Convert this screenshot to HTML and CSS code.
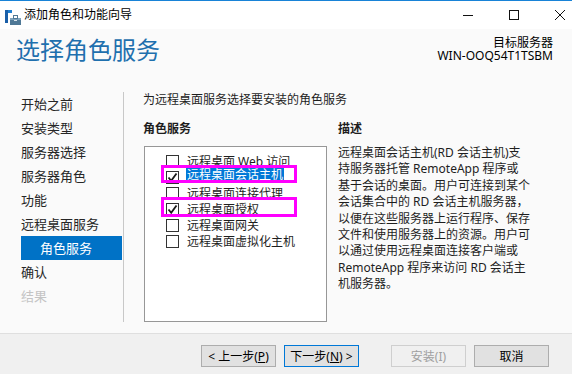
FILE: index.html
```html
<!DOCTYPE html>
<html lang="zh-CN">
<head>
  <meta charset="UTF-8">
  <meta name="viewport" content="width=device-width, initial-scale=1.0">
  <title>添加角色和功能向导</title>
  <link rel="stylesheet" href="styles.css">
</head>
<body>
  <div class="window">

    <div class="titlebar">
      <svg class="app-icon" width="16" height="15" viewBox="0 0 16 15">
        <rect x="0" y="0" width="7" height="3" fill="#1f7fd1"/>
        <rect x="0" y="0" width="3" height="13" fill="#1a5fa8"/>
        <rect x="5" y="8" width="11" height="7" fill="#4f7896"/>
        <rect x="5" y="8" width="11" height="2" fill="#7fa3bd"/>
        <rect x="8.5" y="5.5" width="4" height="3" fill="none" stroke="#4f7896"/>
        <rect x="9" y="10" width="3" height="1" fill="#d9e4ec"/>
      </svg>
      <span class="titulo">添加角色和功能向导</span>
      <div class="controles">
        <span class="controle">
          <svg width="10" height="10" viewBox="0 0 10 10"><path d="M0 5.5h10" stroke="#111" stroke-width="1"/></svg>
        </span>
        <span class="controle">
          <svg width="10" height="10" viewBox="0 0 10 10"><rect x="0.5" y="0.5" width="9" height="9" fill="none" stroke="#111"/></svg>
        </span>
        <span class="controle">
          <svg width="10" height="10" viewBox="0 0 10 10"><path d="M0 0L10 10M10 0L0 10" stroke="#111" stroke-width="1"/></svg>
        </span>
      </div>
    </div>

    <header class="cabecalho">
      <h1>选择角色服务</h1>
      <div class="destino">
        <div>目标服务器</div>
        <div class="servidor">WIN-OOQ54T1TSBM</div>
      </div>
    </header>

    <main class="principal">
      <ul class="etapas">
        <li>开始之前</li>
        <li>安装类型</li>
        <li>服务器选择</li>
        <li>服务器角色</li>
        <li>功能</li>
        <li>远程桌面服务</li>
        <li class="sub ativa">角色服务</li>
        <li>确认</li>
        <li class="desativada">结果</li>
      </ul>

      <div class="conteudo">
        <p class="intro">为远程桌面服务选择要安装的角色服务</p>
        <div class="colunas">
          <div class="papeis">
            <h2>角色服务</h2>
            <div class="lista">
              <ul>
                <li><span class="caixa"></span><span class="rotulo">远程桌面 Web 访问</span></li>
                <li><span class="caixa"><svg width="11" height="11" viewBox="0 0 11 11"><path d="M1.5 5.5L4.2 8.8L9.5 1.5" fill="none" stroke="#1a1a1a" stroke-width="1.8"/></svg></span><span class="rotulo selecionado">远程桌面会话主机</span></li>
                <li><span class="caixa"></span><span class="rotulo">远程桌面连接代理</span></li>
                <li><span class="caixa"><svg width="11" height="11" viewBox="0 0 11 11"><path d="M1.5 5.5L4.2 8.8L9.5 1.5" fill="none" stroke="#1a1a1a" stroke-width="1.8"/></svg></span><span class="rotulo">远程桌面授权</span></li>
                <li><span class="caixa"></span><span class="rotulo">远程桌面网关</span></li>
                <li><span class="caixa"></span><span class="rotulo">远程桌面虚拟化主机</span></li>
              </ul>
              <div class="marca marca-1"></div>
              <div class="marca marca-2"></div>
            </div>
          </div>
          <div class="descricao">
            <h2>描述</h2>
            <p>远程桌面会话主机(RD 会话主机)支<br>持服务器托管 RemoteApp 程序或<br>基于会话的桌面。用户可连接到某个<br>会话集合中的 RD 会话主机服务器，<br>以便在这些服务器上运行程序、保存<br>文件和使用服务器上的资源。用户可<br>以通过使用远程桌面连接客户端或<br>RemoteApp 程序来访问 RD 会话主<br>机服务器。</p>
          </div>
        </div>
      </div>
    </main>

    <footer class="rodape">
      <button class="botao">&lt; 上一步(<u>P</u>)</button>
      <button class="botao padrao">下一步(<u>N</u>) &gt;</button>
      <button class="botao separado" disabled>安装(I)</button>
      <button class="botao">取消</button>
    </footer>

  </div>
</body>
</html>
```

FILE: styles.css
```css
* {
  box-sizing: border-box;
  margin: 0;
  padding: 0;
}

body {
  width: 572px;
  height: 374px;
  overflow: hidden;
  background-color: #fafafa;
  color: #1e1e1e;
  font-family: "Noto Sans", "Noto Sans CJK SC", sans-serif;
  font-size: 12px;
}

ul {
  list-style: none;
}

.window {
  display: flex;
  flex-direction: column;
  height: 374px;
  border-top: 1px solid #1883d7;
}

/* barra de titulo */
.titlebar {
  display: flex;
  align-items: center;
  height: 28px;
  background-color: #fff;
}

.app-icon {
  margin-left: 5px;
  margin-top: 4px;
}

.titulo {
  margin-left: 3px;
  line-height: 16px;
  color: #000;
}

.controles {
  display: flex;
  margin-left: auto;
  margin-right: -11px;
}

.controle {
  display: flex;
  justify-content: center;
  align-items: center;
  width: 46px;
  height: 28px;
}

/* cabecalho */
.cabecalho {
  display: flex;
  justify-content: space-between;
  height: 51px;
}

.cabecalho h1 {
  margin: 5px 0 0 16px;
  font-size: 24px;
  font-weight: normal;
  line-height: 32px;
  color: #1f70ae;
}

.destino {
  margin: 8px 19px 0 0;
  text-align: right;
  color: #000;
}

.destino div {
  height: 12px;
  line-height: 12px;
}

.destino .servidor {
  margin-top: 1px;
}

/* area principal */
.principal {
  display: flex;
  height: 253px;
}

.etapas {
  align-self: flex-start;
  width: 103px;
  height: 230px;
  margin: 12px 0 0 21px;
  border-right: 1px solid #c8c8c8;
}

.etapas li {
  height: 24px;
  line-height: 24px;
  font-size: 13px;
  color: #262626;
}

.etapas .sub {
  padding-left: 19px;
}

.etapas .ativa {
  background-color: #0072c6;
  color: #fff;
  margin-right: 1px;
}

.etapas .desativada {
  color: #c4c4c4;
}

.conteudo {
  padding: 12px 0 0 19px;
}

.intro {
  line-height: 16px;
  color: #1e1e1e;
}

.colunas {
  display: flex;
  margin-top: 13px;
}

h2 {
  font-size: 12px;
  font-weight: bold;
  line-height: 16px;
  color: #1e1e1e;
}

.lista {
  position: relative;
  width: 183px;
  height: 176px;
  margin: 9px 0 0 1px;
  padding: 6px 0 0 21px;
  background-color: #fff;
  border: 1px solid #979797;
}

.lista li {
  display: flex;
  align-items: center;
  gap: 8px;
  height: 16px;
  white-space: nowrap;
}

.caixa {
  display: flex;
  justify-content: center;
  align-items: center;
  width: 13px;
  height: 13px;
  border: 1px solid #333;
  background-color: #fff;
}

.rotulo {
  display: inline-block;
  height: 15px;
  line-height: 15px;
}

.selecionado {
  background-color: #0078d7;
  color: #fff;
  padding: 0 1px;
  margin-left: -1px;
  margin-bottom: 4px;
  height: 14px;
  line-height: 14px;
}

/* marcacoes em magenta sobre a lista */
.marca {
  position: absolute;
  left: 16px;
  width: 136px;
  border: 3px solid #f0f;
}

.marca-1 {
  top: 18px;
  height: 18px;
}

.marca-2 {
  top: 50px;
  height: 20px;
}

.descricao {
  margin-left: 11px;
}

.descricao p {
  margin-top: 8px;
  line-height: 16.4px;
  white-space: nowrap;
  color: #1e1e1e;
}

/* rodape */
.rodape {
  display: flex;
  gap: 8px;
  height: 41px;
  padding: 11px 23px 0 0;
  justify-content: flex-end;
  background-color: #f0f0f0;
  border-top: 1px solid #dfdfdf;
}

.botao {
  width: 75px;
  height: 22px;
  font-family: inherit;
  font-size: 12px;
  color: #000;
  background-color: #e1e1e1;
  border: 1px solid #adadad;
}

.botao.padrao {
  border-color: #0078d7;
}

.botao.separado {
  margin-left: 24px;
}

.botao:disabled {
  color: #a0a0a0;
  background-color: #f0f0f0;
  border-color: #cfcfcf;
}
```
